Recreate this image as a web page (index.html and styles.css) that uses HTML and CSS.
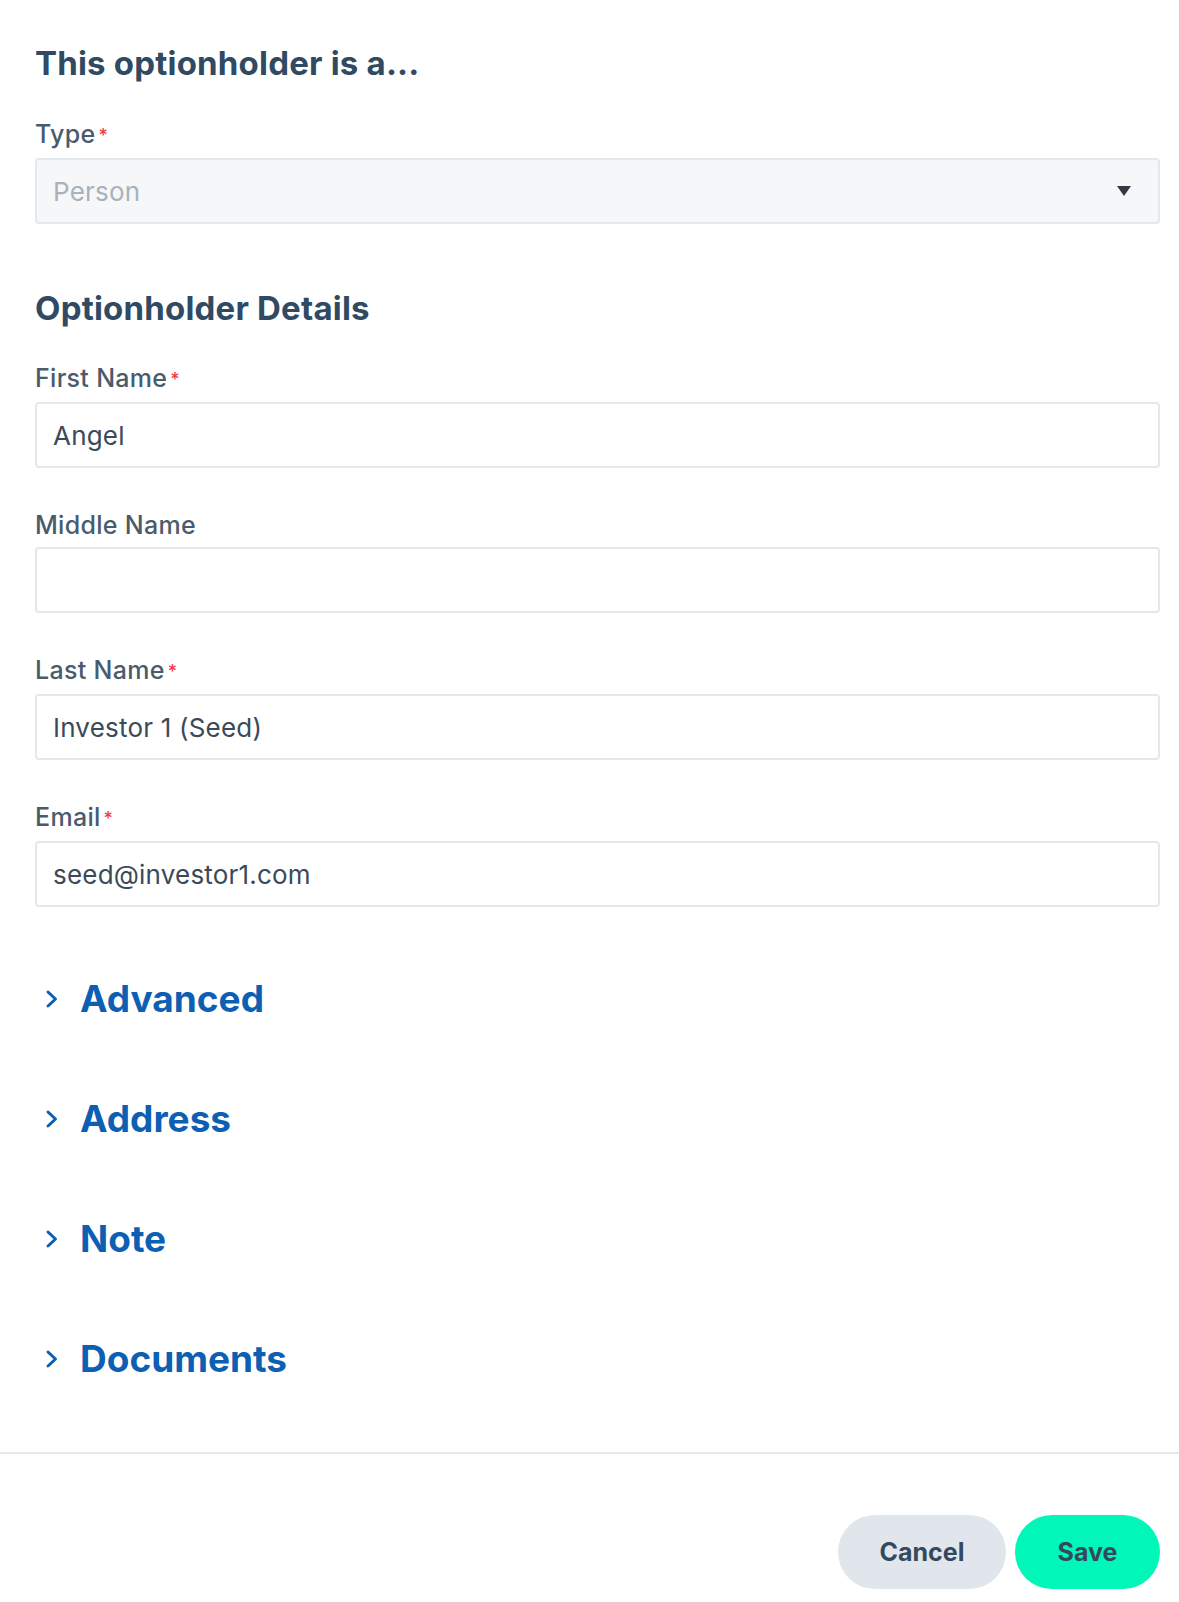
FILE: index.html
```html
<!DOCTYPE html>
<html lang="en">
<head>
  <meta charset="UTF-8" />
  <title>Edit Optionholder</title>
  <link rel="stylesheet" href="styles.css">
</head>
<body>
  <form class="holder-form">
    <div class="form-body">
      <h2 class="section-title">This optionholder is a...</h2>

      <div class="field">
        <label for="type">Type<span class="req">*</span></label>
        <div class="select-wrap">
          <select id="type" disabled>
            <option>Person</option>
          </select>
          <span class="caret"></span>
        </div>
      </div>

      <h2 class="section-title details">Optionholder Details</h2>

      <div class="field">
        <label for="first">First Name<span class="req">*</span></label>
        <input type="text" id="first" value="Angel" />
      </div>

      <div class="field">
        <label for="middle">Middle Name</label>
        <input type="text" id="middle" value="" />
      </div>

      <div class="field">
        <label for="last">Last Name<span class="req">*</span></label>
        <input type="text" id="last" value="Investor 1 (Seed)" />
      </div>

      <div class="field">
        <label for="email">Email<span class="req">*</span></label>
        <input type="text" id="email" value="seed@investor1.com" />
      </div>

      <div class="accordions">
        <button type="button" class="accordion">
          <svg class="chevron" viewBox="0 0 14 20" width="14" height="20"><path d="M3 3 L10.5 10 L3 17" fill="none" stroke="currentColor" stroke-width="3" stroke-linecap="round" stroke-linejoin="round"/></svg>
          Advanced
        </button>
        <button type="button" class="accordion">
          <svg class="chevron" viewBox="0 0 14 20" width="14" height="20"><path d="M3 3 L10.5 10 L3 17" fill="none" stroke="currentColor" stroke-width="3" stroke-linecap="round" stroke-linejoin="round"/></svg>
          Address
        </button>
        <button type="button" class="accordion">
          <svg class="chevron" viewBox="0 0 14 20" width="14" height="20"><path d="M3 3 L10.5 10 L3 17" fill="none" stroke="currentColor" stroke-width="3" stroke-linecap="round" stroke-linejoin="round"/></svg>
          Note
        </button>
        <button type="button" class="accordion">
          <svg class="chevron" viewBox="0 0 14 20" width="14" height="20"><path d="M3 3 L10.5 10 L3 17" fill="none" stroke="currentColor" stroke-width="3" stroke-linecap="round" stroke-linejoin="round"/></svg>
          Documents
        </button>
      </div>
    </div>

    <div class="form-footer">
      <button type="button" class="btn btn-cancel">Cancel</button>
      <button type="submit" class="btn btn-save">Save</button>
    </div>
  </form>
</body>
</html>
```

FILE: styles.css
```css
body {
  font-family: Inter, "Noto Sans", sans-serif;
  margin: 0;
  background: #ffffff;
  color: #3a4c5e;
}

.holder-form {
  width: 1179px;
}

.form-body {
  padding: 43px 19px 0 35px;
}

.section-title {
  font-size: 33px;
  font-weight: 700;
  letter-spacing: 0.2px;
  color: #2f4a62;
  margin: 0 0 36px;
  line-height: 40px;
}

.section-title.details {
  margin-top: 64px;
  margin-bottom: 35px;
}

.field {
  margin-bottom: 42px;
}

label {
  display: block;
  font-size: 25px;
  font-weight: 500;
  letter-spacing: 0.3px;
  color: #4a5b6c;
  line-height: 30px;
  margin-bottom: 7px;
}

.req {
  color: #ef3b4a;
  font-size: 18px;
  margin-left: 3px;
  vertical-align: 1px;
}

input, select {
  display: block;
  width: 100%;
  height: 66px;
  box-sizing: border-box;
  border: 2px solid #e3e8ee;
  border-radius: 4px;
  padding: 0 16px;
  font-family: Inter, "Noto Sans", sans-serif;
  font-size: 26px;
  letter-spacing: 0.2px;
  color: #3b4a5a;
  background: #ffffff;
}

.select-wrap {
  position: relative;
}

select {
  appearance: none;
  -webkit-appearance: none;
  background: #f5f7f9;
  color: #a8b2bc;
  opacity: 1;
}

.caret {
  position: absolute;
  right: 29px;
  top: 28px;
  width: 0;
  height: 0;
  border-left: 7px solid transparent;
  border-right: 7px solid transparent;
  border-top: 10px solid #333a42;
}

.accordions {
  display: flex;
  flex-direction: column;
  gap: 70px;
  margin-top: 67px;
  padding-bottom: 68px;
}

.accordion {
  display: flex;
  align-items: center;
  gap: 21px;
  background: none;
  border: none;
  padding: 0 0 0 10px;
  margin: 0;
  font-family: Inter, "Noto Sans", sans-serif;
  font-size: 37px;
  font-weight: 700;
  color: #0d5fb3;
  line-height: 50px;
  cursor: pointer;
  text-align: left;
}

.chevron {
  color: #0d5fb3;
}

.form-footer {
  border-top: 2px solid #e3e8ee;
  display: flex;
  justify-content: flex-end;
  gap: 9px;
  padding: 61px 19px 12px 0;
  width: 1179px;
  box-sizing: border-box;
}

.btn {
  height: 74px;
  border: none;
  border-radius: 37px;
  font-family: Inter, "Noto Sans", sans-serif;
  font-size: 25px;
  font-weight: 700;
  color: #34495e;
  cursor: pointer;
}

.btn-cancel {
  width: 168px;
  background: #e1e6ec;
}

.btn-save {
  width: 145px;
  background: #00f7b9;
}
```
